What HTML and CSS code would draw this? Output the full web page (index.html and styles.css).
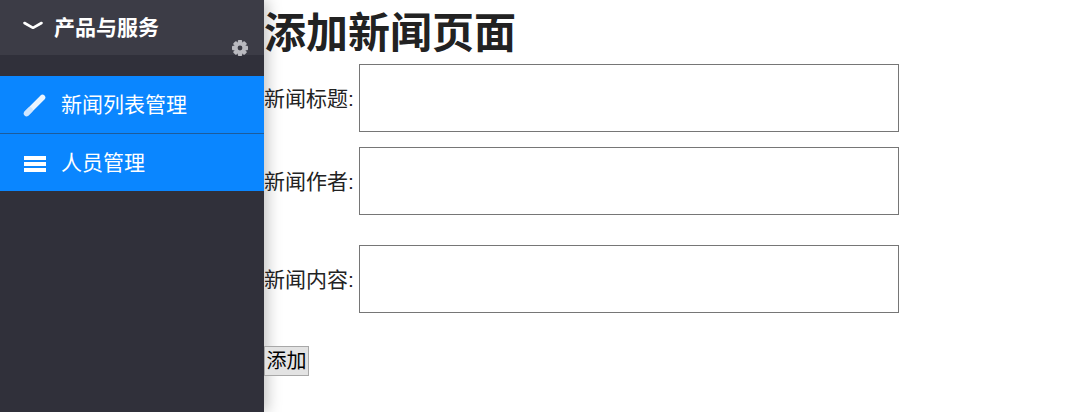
FILE: index.html
```html
<!DOCTYPE html>
<html lang="zh-CN">
<head>
    <meta charset="UTF-8">
    <title>添加新闻页面</title>
    <link rel="stylesheet" href="styles.css">
</head>
<body>
    <div class="sidebar">
        <div class="side-header">
            <svg class="chevron" width="20" height="10" viewBox="0 0 20 10"><path d="M1.5 2 L10 6.8 L18.5 2" fill="none" stroke="#fff" stroke-width="2.6" stroke-linecap="round" stroke-linejoin="round"/></svg>
            <span class="side-title">产品与服务</span>
            <svg class="gear" width="18" height="18" viewBox="0 0 18 18">
                <g fill="#b9b9bf">
                    <rect x="6.8" y="1" width="4.4" height="16" rx="1"/>
                    <rect x="6.8" y="1" width="4.4" height="16" rx="1" transform="rotate(45 9 9)"/>
                    <rect x="6.8" y="1" width="4.4" height="16" rx="1" transform="rotate(90 9 9)"/>
                    <rect x="6.8" y="1" width="4.4" height="16" rx="1" transform="rotate(135 9 9)"/>
                    <circle cx="9" cy="9" r="6"/>
                </g>
                <circle cx="9" cy="9" r="2.4" fill="#3b3b45"/>
            </svg>
        </div>
        <ul class="side-menu">
            <li class="side-item">
                <svg width="24" height="24" viewBox="0 0 24 24"><path d="M4 20 L19.5 4.5" stroke="#fff" stroke-width="5.5" stroke-linecap="round" opacity="0.92"/><path d="M3.5 20.5 L7 17" stroke="#cfe6ff" stroke-width="5.5" stroke-linecap="round"/></svg>
                <span>新闻列表管理</span>
            </li>
            <li class="side-item">
                <svg width="24" height="24" viewBox="0 0 24 24"><g fill="#fff"><rect x="1" y="5" width="22" height="4"/><rect x="1" y="11" width="22" height="4"/><rect x="1" y="17" width="22" height="4"/></g></svg>
                <span>人员管理</span>
            </li>
        </ul>
    </div>

    <div class="main">
        <h1>添加新闻页面</h1>
        <form>
            <div class="form-row">
                <label for="title">新闻标题:</label>
                <textarea id="title"></textarea>
            </div>
            <div class="form-row">
                <label for="author">新闻作者:</label>
                <textarea id="author"></textarea>
            </div>
            <div class="form-row content-row">
                <label for="content">新闻内容:</label>
                <textarea id="content"></textarea>
            </div>
            <button type="button" class="btn">添加</button>
        </form>
    </div>
</body>
</html>
```

FILE: styles.css
```css
* {
    margin: 0;
    padding: 0;
    box-sizing: border-box;
}

html, body {
    height: 412px;
    overflow: hidden;
}

body {
    display: flex;
    background: #fff;
    color: #222;
    font-family: "Liberation Sans", "Noto Sans CJK SC", sans-serif;
}

.sidebar {
    width: 264px;
    height: 100%;
    flex-shrink: 0;
    background: #30303a;
    box-shadow: 3px 0 14px rgba(0, 0, 0, 0.25);
}

.side-header {
    position: relative;
    display: flex;
    align-items: center;
    height: 55px;
    padding-left: 23px;
    margin-bottom: 21px;
    background: #3c3c46;
}

.chevron {
    margin-top: -3px;
}

.side-title {
    margin-left: 11px;
    margin-bottom: 4px;
    color: #fff;
    font-size: 21px;
    font-weight: bold;
}

.gear {
    position: absolute;
    right: 15px;
    top: 39px;
}

.side-menu {
    list-style: none;
}

.side-item {
    display: flex;
    align-items: center;
    height: 58px;
    padding-left: 23px;
    background: #0a86ff;
    color: #fff;
    font-size: 21px;
    border-bottom: 1px solid #1d5c9c;
}

.side-item:last-child {
    height: 57px;
    border-bottom: none;
}

.side-item span {
    margin-left: 14px;
    margin-bottom: 3px;
}

.main {
    flex: 1;
}

h1 {
    font-size: 42px;
    line-height: 67px;
    height: 64px;
    color: #222;
}

.form-row {
    display: flex;
    align-items: center;
    margin-bottom: 15px;
    font-size: 21px;
}

.form-row label {
    width: 95px;
    margin-bottom: 3px;
    white-space: nowrap;
}

.content-row {
    margin-top: 30px;
    margin-bottom: 33px;
}

textarea {
    display: block;
    width: 540px;
    height: 68px;
    border: 1px solid #767676;
    background: #fff;
    resize: none;
}

.btn {
    display: block;
    width: 45px;
    height: 30px;
    font-family: inherit;
    font-size: 20px;
    line-height: 28px;
    color: #000;
    background: #e3e3e3;
    border: 1px solid #a8a8a8;
}
```
